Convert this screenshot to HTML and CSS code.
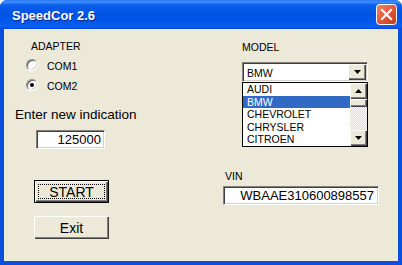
FILE: index.html
```html
<!DOCTYPE html>
<html lang="en">
<head>
    <meta charset="UTF-8">
    <title>SpeedCor 2.6</title>
    <link rel="stylesheet" href="styles.css">
</head>
<body>
    <!-- window -->
    <div class="window">
        <div class="titlebar">
            <span class="title">SpeedCor 2.6</span>
            <div class="close-btn">
                <svg width="21" height="21" viewBox="0 0 21 21">
                    <defs>
                        <linearGradient id="closeGrad" x1="0" y1="0" x2="1" y2="1">
                            <stop offset="0" stop-color="#f08a6c"/>
                            <stop offset="0.5" stop-color="#e0583a"/>
                            <stop offset="1" stop-color="#c23a1c"/>
                        </linearGradient>
                    </defs>
                    <rect x="0.5" y="0.5" width="20" height="20" rx="3" fill="url(#closeGrad)" stroke="#fff"/>
                    <path d="M6 6 L15 15 M15 6 L6 15" stroke="#fff" stroke-width="2.2" stroke-linecap="square"/>
                </svg>
            </div>
        </div>

        <div class="client">
            <!-- left column -->
            <div class="col-left">
                <div class="label adapter">ADAPTER</div>
                <div class="radios">
                    <div class="radio"><span class="radio-dot"></span><span>COM1</span></div>
                    <div class="radio"><span class="radio-dot checked"></span><span>COM2</span></div>
                </div>
                <div class="prompt">Enter new indication</div>
                <div class="field indication">125000</div>
                <button class="btn default"><span class="focus">START</span></button>
                <button class="btn exit">Exit</button>
            </div>

            <!-- right column -->
            <div class="col-right">
                <div class="label model">MODEL</div>
                <div class="combo">
                    <span class="combo-value">BMW</span>
                    <span class="arrow-btn combo-arrow">
                        <svg width="7" height="4" viewBox="0 0 7 4"><polygon points="0,0 7,0 3.5,4" fill="#000"/></svg>
                    </span>
                </div>
                <div class="listbox">
                    <ul class="items">
                        <li>AUDI</li>
                        <li class="selected">BMW</li>
                        <li>CHEVROLET</li>
                        <li>CHRYSLER</li>
                        <li>CITROEN</li>
                    </ul>
                    <div class="scrollbar">
                        <span class="arrow-btn">
                            <svg width="7" height="4" viewBox="0 0 7 4"><polygon points="0,4 7,4 3.5,0" fill="#000"/></svg>
                        </span>
                        <span class="thumb"></span>
                        <span class="track"></span>
                        <span class="arrow-btn">
                            <svg width="7" height="4" viewBox="0 0 7 4"><polygon points="0,0 7,0 3.5,4" fill="#000"/></svg>
                        </span>
                    </div>
                </div>
                <div class="label vin">VIN</div>
                <div class="field vin-field">WBAAE310600898557</div>
            </div>
        </div>
    </div>
</body>
</html>
```
FILE: styles.css
```css
:root {
    --face: #ece9d8;
    --frame: #0a4fdc;
    --select: #316ac5;
}

* {
    box-sizing: border-box;
}

body {
    margin: 0;
    background: #fff;
    font-family: 'Liberation Sans', Arial, sans-serif;
    color: #000;
}

.window {
    width: 402px;
    height: 265px;
    display: flex;
    flex-direction: column;
    border-radius: 7px 7px 0 0;
    overflow: hidden;
    background: var(--frame);
}

/* title bar */
.titlebar {
    height: 29px;
    flex: none;
    display: flex;
    align-items: center;
    justify-content: space-between;
    padding: 0 5px 0 12px;
    background: linear-gradient(#2a78f5 0, #3d8fff 2px, #0b5fec 5px, #0055e5 12px, #0056e8 22px, #0762f2 26px, #0a48d8 29px);
}

.title {
    font-weight: bold;
    font-size: 13px;
    color: #fff;
    text-shadow: 1px 1px #0a2a9a;
    padding-top: 1px;
}

.close-btn {
    width: 21px;
    height: 21px;
    display: flex;
}

/* client area */
.client {
    flex: 1;
    margin: 0 4px 4px;
    background: var(--face);
    display: grid;
    grid-template-columns: 215px 1fr;
    align-items: start;
}

.col-left,
.col-right {
    display: flex;
    flex-direction: column;
    align-items: flex-start;
}

.label {
    font-size: 10.5px;
    line-height: 13px;
}

.adapter {
    margin: 11px 0 0 27px;
}

.radios {
    margin: 7px 0 0 22px;
    display: flex;
    flex-direction: column;
    gap: 7px;
}

.radio {
    display: flex;
    align-items: flex-start;
    height: 13px;
    font-size: 10.5px;
    line-height: 13px;
    gap: 9px;
}

.radio-dot {
    width: 12px;
    height: 12px;
    margin-top: -1px;
    border-radius: 50%;
    background: #fff;
    border: 1px solid;
    border-color: #909090 #fff #fff #909090;
    box-shadow: inset 1px 1px #606060, inset -1px -1px #d4d0c8;
    display: flex;
    align-items: center;
    justify-content: center;
}

.radio-dot.checked::after {
    content: "";
    width: 4px;
    height: 4px;
    border-radius: 50%;
    background: #000;
}

.prompt {
    margin: 14px 0 0 11px;
    font-size: 13.5px;
    line-height: 16px;
}

/* sunken text fields */
.field {
    height: 19px;
    background: #fff;
    border: 1px solid;
    border-color: #808080 #fff #fff #808080;
    box-shadow: inset 1px 1px #404040, inset -1px -1px #d4d0c8;
    font-size: 13px;
    line-height: 16px;
    text-align: right;
    padding: 1px 3px 0;
}

.indication {
    width: 69px;
    margin: 7px 0 0 32px;
}

.vin-field {
    width: 156px;
    margin: 3px 0 0 4px;
    padding-right: 4px;
}

/* buttons */
.btn {
    width: 75px;
    height: 23px;
    margin-left: 30px;
    padding: 0;
    font-family: inherit;
    font-size: 14px;
    color: #000;
    background: var(--face);
    border: none;
    box-shadow: inset 1px 1px #fff, inset -1px -1px #404040, inset -2px -2px #808080;
}

.btn.default {
    margin-top: 31px;
    border: 1px solid #000;
    padding: 3px;
    display: flex;
}

.focus {
    flex: 1;
    display: flex;
    align-items: center;
    justify-content: center;
    border: 1px dotted #000;
}

.btn.exit {
    margin-top: 13px;
}

/* model combo */
.model {
    margin: 12px 0 0 23px;
}

.combo {
    width: 126px;
    height: 20px;
    margin: 8px 0 0 23px;
    display: flex;
    background: #fff;
    border: 1px solid;
    border-color: #808080 #fff #fff #808080;
    box-shadow: inset 1px 1px #404040, inset -1px -1px #d4d0c8;
    padding: 1px 1px 1px 4px;
}

.combo-value {
    flex: 1;
    font-size: 10.5px;
    line-height: 13px;
    padding-top: 3px;
}

.arrow-btn {
    width: 17px;
    height: 16px;
    flex: none;
    display: flex;
    align-items: center;
    justify-content: center;
    background: var(--face);
    box-shadow: inset 1px 1px #fff, inset -1px -1px #404040, inset -2px -2px #808080;
}

.combo-arrow {
    width: 18px;
}

.listbox {
    width: 126px;
    height: 65px;
    margin-left: 23px;
    border: 1px solid #000;
    background: #fff;
    display: flex;
}

.items {
    flex: 1;
    margin: 0;
    padding: 0;
    list-style: none;
    font-size: 10.5px;
    line-height: 12.5px;
}

.items li {
    padding-left: 4px;
}

.items .selected {
    background: var(--select);
    color: #fff;
}

.scrollbar {
    width: 17px;
    display: flex;
    flex-direction: column;
}

.thumb {
    height: 8px;
    background: var(--face);
    box-shadow: inset 1px 1px #fff, inset -1px -1px #404040, inset -2px -2px #808080;
}

.track {
    flex: 1;
    background: repeating-conic-gradient(#fff 0 25%, #dcd9c8 0 50%) 0 0 / 2px 2px;
}

.vin {
    margin: 23px 0 0 6px;
}
```
